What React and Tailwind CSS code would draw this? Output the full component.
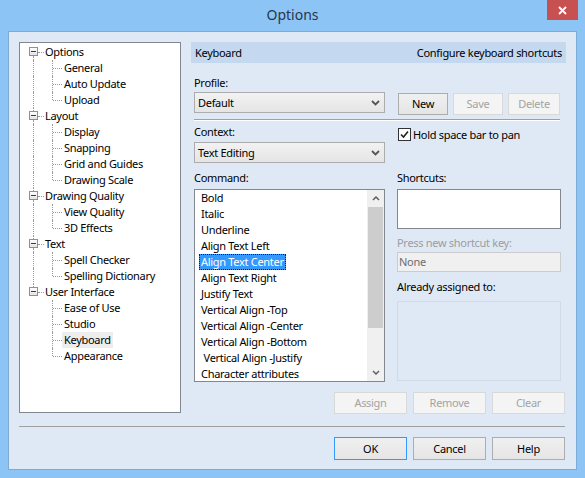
import React from 'react'

const groups = [
  ['Options', ['General', 'Auto Update', 'Upload']],
  ['Layout', ['Display', 'Snapping', 'Grid and Guides', 'Drawing Scale']],
  ['Drawing Quality', ['View Quality', '3D Effects']],
  ['Text', ['Spell Checker', 'Spelling Dictionary']],
  ['User Interface', ['Ease of Use', 'Studio', 'Keyboard', 'Appearance']],
]

const commands = [
  'Bold',
  'Italic',
  'Underline',
  'Align Text Left',
  'Align Text Center',
  'Align Text Right',
  'Justify Text',
  'Vertical Align -Top',
  'Vertical Align -Center',
  'Vertical Align -Bottom',
  ' Vertical Align -Justify',
  'Character attributes',
]

const dot = 'absolute border-[#9a9a9a] border-dotted'

function Chevron() {
  return (
    <svg width="9" height="6" viewBox="0 0 9 6">
      <polyline points="1,1 4.5,4.5 8,1" fill="none" stroke="#555" strokeWidth="1.8" />
    </svg>
  )
}

function Dropdown({ value }) {
  return (
    <div className="w-[191px] h-[21px] border border-[#acacac] bg-linear-to-b from-[#f2f2f2] to-[#e5e5e5] flex items-center justify-between pl-[3px] pr-[4px]">
      <span>{value}</span>
      <Chevron />
    </div>
  )
}

function Button({ children, disabled, primary, className = '' }) {
  let look = 'border-[#adadad] bg-linear-to-b from-[#f0f0f0] to-[#e5e5e5] text-black'
  if (disabled) look = 'border-[#d9d9d9] bg-[#f4f4f4] text-[#a3a3a3]'
  if (primary) look = 'border-[#3399ff] bg-linear-to-b from-[#f0f0f0] to-[#e5e5e5] text-black'
  return (
    <div className={`border flex items-center justify-center ${look} ${className}`}>
      {children}
    </div>
  )
}

function Tree() {
  return (
    <div className="w-[162px] h-[371px] shrink-0 border border-[#828790] bg-white pt-[1px]">
      {groups.map(([name, kids], gi) => {
        const lastGroup = gi === groups.length - 1
        return (
          <div key={name}>
            <div className="h-[16px] flex items-center">
              <div className="relative w-[24px] h-full shrink-0">
                {gi > 0 && <div className={`${dot} left-[13px] top-0 h-[3px] border-l`} />}
                {!lastGroup && <div className={`${dot} left-[13px] top-[12px] bottom-0 border-l`} />}
                <div className="absolute left-[9px] top-[3px] w-[9px] h-[9px] border border-[#919191] bg-linear-to-b from-white to-[#e4e4e4] flex items-center justify-center">
                  <div className="w-[5px] h-px bg-[#1f3d8a]" />
                </div>
                <div className={`${dot} left-[18px] top-[8px] w-[6px] border-t`} />
              </div>
              <span className="pl-[1px]">{name}</span>
            </div>
            {kids.map((kid, ki) => (
              <div key={kid} className="h-[16px] flex items-center">
                <div className="relative w-[24px] h-full shrink-0">
                  {!lastGroup && <div className={`${dot} left-[13px] top-0 bottom-0 border-l`} />}
                </div>
                <div className="relative w-[18px] h-full shrink-0">
                  <div className={`${dot} left-[8px] top-0 border-l ${ki === kids.length - 1 ? 'h-[8px]' : 'bottom-0'}`} />
                  <div className={`${dot} left-[9px] top-[8px] w-[9px] border-t`} />
                </div>
                <span className={`px-[2px] ${kid === 'Keyboard' ? 'bg-[#ededed]' : ''}`}>{kid}</span>
              </div>
            ))}
          </div>
        )
      })}
    </div>
  )
}

function CommandList() {
  return (
    <div className="w-[191px] h-[193px] mt-[3px] border border-[#828790] bg-white flex overflow-hidden">
      <div className="flex-1 pl-[4px] overflow-hidden">
        {commands.map((c) => (
          <div key={c} className="h-[16px] flex items-center">
            {c === 'Align Text Center' ? (
              <span className="h-[16px] px-[1px] bg-[#3399ff] text-white border border-dotted border-[#1a1a1a] flex items-center">
                {c}
              </span>
            ) : (
              <span className="px-[2px] whitespace-pre">{c}</span>
            )}
          </div>
        ))}
      </div>
      {/* scrollbar */}
      <div className="w-[17px] shrink-0 bg-[#f0f0f0] flex flex-col">
        <div className="h-[17px] flex items-center justify-center">
          <svg width="8" height="5" viewBox="0 0 8 5">
            <polyline points="1,4 4,1 7,4" fill="none" stroke="#606060" strokeWidth="1.5" />
          </svg>
        </div>
        <div className="h-[121px] mx-[1px] bg-[#cdcdcd]" />
        <div className="flex-1" />
        <div className="h-[17px] flex items-center justify-center">
          <svg width="8" height="5" viewBox="0 0 8 5">
            <polyline points="1,1 4,4 7,1" fill="none" stroke="#606060" strokeWidth="1.5" />
          </svg>
        </div>
      </div>
    </div>
  )
}

export default function App() {
  return (
    <div className="w-[585px] h-[478px] bg-[#8cc4f6] flex flex-col font-['Segoe_UI','Noto_Sans',sans-serif] text-[11px] leading-[16px] tracking-[-0.3px] text-black">
      {/* title bar */}
      <div className="relative h-[31px] shrink-0 flex items-center justify-center">
        <span className="text-[14px] tracking-normal text-[#25384b] -mt-[1px]">Options</span>
        <div className="absolute top-0 right-[7px] w-[31px] h-[20px] bg-[#c75050] flex items-center justify-center">
          <svg width="9" height="9" viewBox="0 0 9 9">
            <path d="M1 1 L8 8 M8 1 L1 8" stroke="white" strokeWidth="1.8" />
          </svg>
        </div>
      </div>

      {/* client */}
      <div className="mx-[8px] mb-[8px] flex-1 bg-[#dfe9f5] border border-[#7eaad6] pl-[10px] pr-[10px] pt-[10px] flex flex-col">
        <div className="flex gap-[10px]">
          <Tree />

          <div className="w-[375px] flex flex-col">
            <div className="h-[21px] bg-[#c4d8ef] flex items-center justify-between pl-[4px] pr-[4px]">
              <span>Keyboard</span>
              <span>Configure keyboard shortcuts</span>
            </div>

            <div className="pl-[3px] flex flex-col">
              {/* profile */}
              <div className="mt-[12px] flex">
                <div className="flex flex-col">
                  <span>Profile:</span>
                  <div className="mt-[1px]">
                    <Dropdown value="Default" />
                  </div>
                </div>
                <div className="ml-[13px] pt-[18px] flex gap-[5px]">
                  <Button className="w-[50px] h-[22px]">New</Button>
                  <Button disabled className="w-[50px] h-[22px]">Save</Button>
                  <Button disabled className="w-[52px] h-[22px]">Delete</Button>
                </div>
              </div>

              <div className="mt-[4px] w-[366px] border-t border-t-[#a0a0a0] border-b border-b-white" />

              {/* context */}
              <div className="mt-[3px] flex">
                <div className="flex flex-col">
                  <span>Context:</span>
                  <div className="mt-[2px]">
                    <Dropdown value="Text Editing" />
                  </div>
                </div>
                <div className="ml-[13px] pt-[4px]">
                  <div className="flex items-center h-[13px]">
                    <div className="w-[13px] h-[13px] border border-[#333] bg-white flex items-center justify-center">
                      <svg width="11" height="11" viewBox="0 0 11 11">
                        <path d="M2 5.5 L4.5 8 L9 2.5" fill="none" stroke="#222" strokeWidth="1.6" />
                      </svg>
                    </div>
                    <span className="ml-[2px]">Hold space bar to pan</span>
                  </div>
                </div>
              </div>

              {/* command + shortcuts */}
              <div className="mt-[7px] flex">
                <div className="flex flex-col">
                  <span>Command:</span>
                  <CommandList />
                </div>
                <div className="ml-[12px] w-[164px] flex flex-col">
                  <span>Shortcuts:</span>
                  <div className="mt-[3px] h-[40px] border border-[#828790] bg-white" />
                  <span className="mt-[6px] text-[#9d9d9d]">Press new shortcut key:</span>
                  <div className="mt-[1px] h-[20px] border border-[#cccccc] bg-[#f0f0f0] pl-[1px] flex items-center text-[#6d6d6d]">
                    None
                  </div>
                  <span className="mt-[7px]">Already assigned to:</span>
                  <div className="mt-[6px] h-[80px] border border-[#d3dae3]" />
                </div>
              </div>

              <div className="mt-[10px] pr-[1px] flex justify-end gap-[6px]">
                <Button disabled className="w-[73px] h-[22px]">Assign</Button>
                <Button disabled className="w-[73px] h-[22px]">Remove</Button>
                <Button disabled className="w-[73px] h-[22px]">Clear</Button>
              </div>
            </div>
          </div>
        </div>

        <div className="mt-[12px] mr-[1px] h-px bg-[#a0a0a0]" />

        <div className="mt-[10px] mr-[1px] flex justify-end gap-[6px]">
          <Button primary className="w-[73px] h-[23px]">OK</Button>
          <Button className="w-[73px] h-[23px]">Cancel</Button>
          <Button className="w-[73px] h-[23px]">Help</Button>
        </div>
      </div>
    </div>
  )
}
